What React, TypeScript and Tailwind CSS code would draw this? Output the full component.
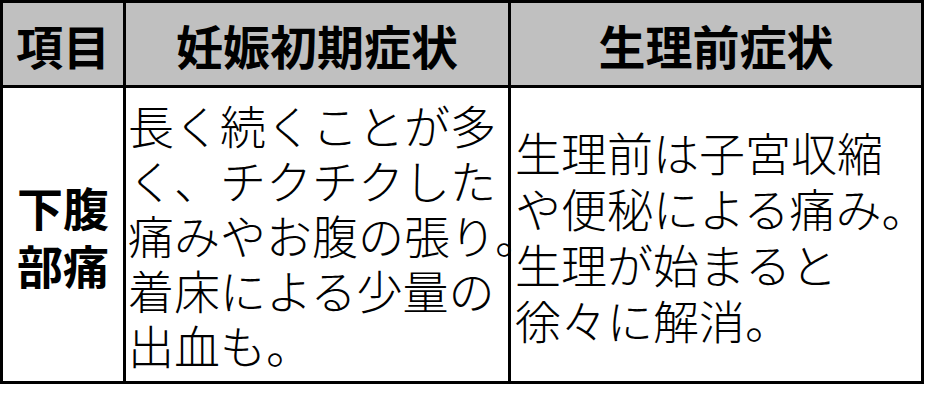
const FONT = "font-['Noto_Sans_CJK_JP','Noto_Sans_CJK_SC',sans-serif]";

const earlyLines = ['長く続くことが多', 'く、チクチクした', '痛みやお腹の張り。', '着床による少量の', '出血も。'];
const pmsLines = ['生理前は子宮収縮', 'や便秘による痛み。', '生理が始まると', '徐々に解消。'];

export default function App() {
  return (
    <div className={`w-[925px] h-[402px] bg-white text-black ${FONT}`}>
      {/* table drawn as grid: black bg shows through the gaps as borders */}
      <div className="grid grid-cols-[120px_382px_410px] grid-rows-[82px_293px] gap-[3px] p-[3px] bg-black w-[924px]">
        {/* header */}
        <div className="bg-[#c0c0c0] flex items-center justify-center text-[47px] font-bold leading-none">
          項目
        </div>
        <div className="bg-[#c0c0c0] flex items-center justify-center text-[47px] font-bold leading-none">
          妊娠初期症状
        </div>
        <div className="bg-[#c0c0c0] flex items-center justify-center text-[47px] font-bold leading-none">
          生理前症状
        </div>

        {/* body */}
        <div className="bg-white flex flex-col items-center justify-center text-[46px] font-bold leading-[58px]">
          <span>下腹</span>
          <span>部痛</span>
        </div>
        <div className="bg-white relative z-10 flex flex-col justify-center pl-[2px] text-[46px] font-light leading-[55px]">
          {earlyLines.map((line) => (
            <span key={line} className="whitespace-nowrap">
              {line}
            </span>
          ))}
        </div>
        <div className="bg-white flex flex-col justify-center pl-[4px] text-[46px] font-light leading-[56px]">
          {pmsLines.map((line) => (
            <span key={line} className="whitespace-nowrap">
              {line}
            </span>
          ))}
        </div>
      </div>
    </div>
  );
}
